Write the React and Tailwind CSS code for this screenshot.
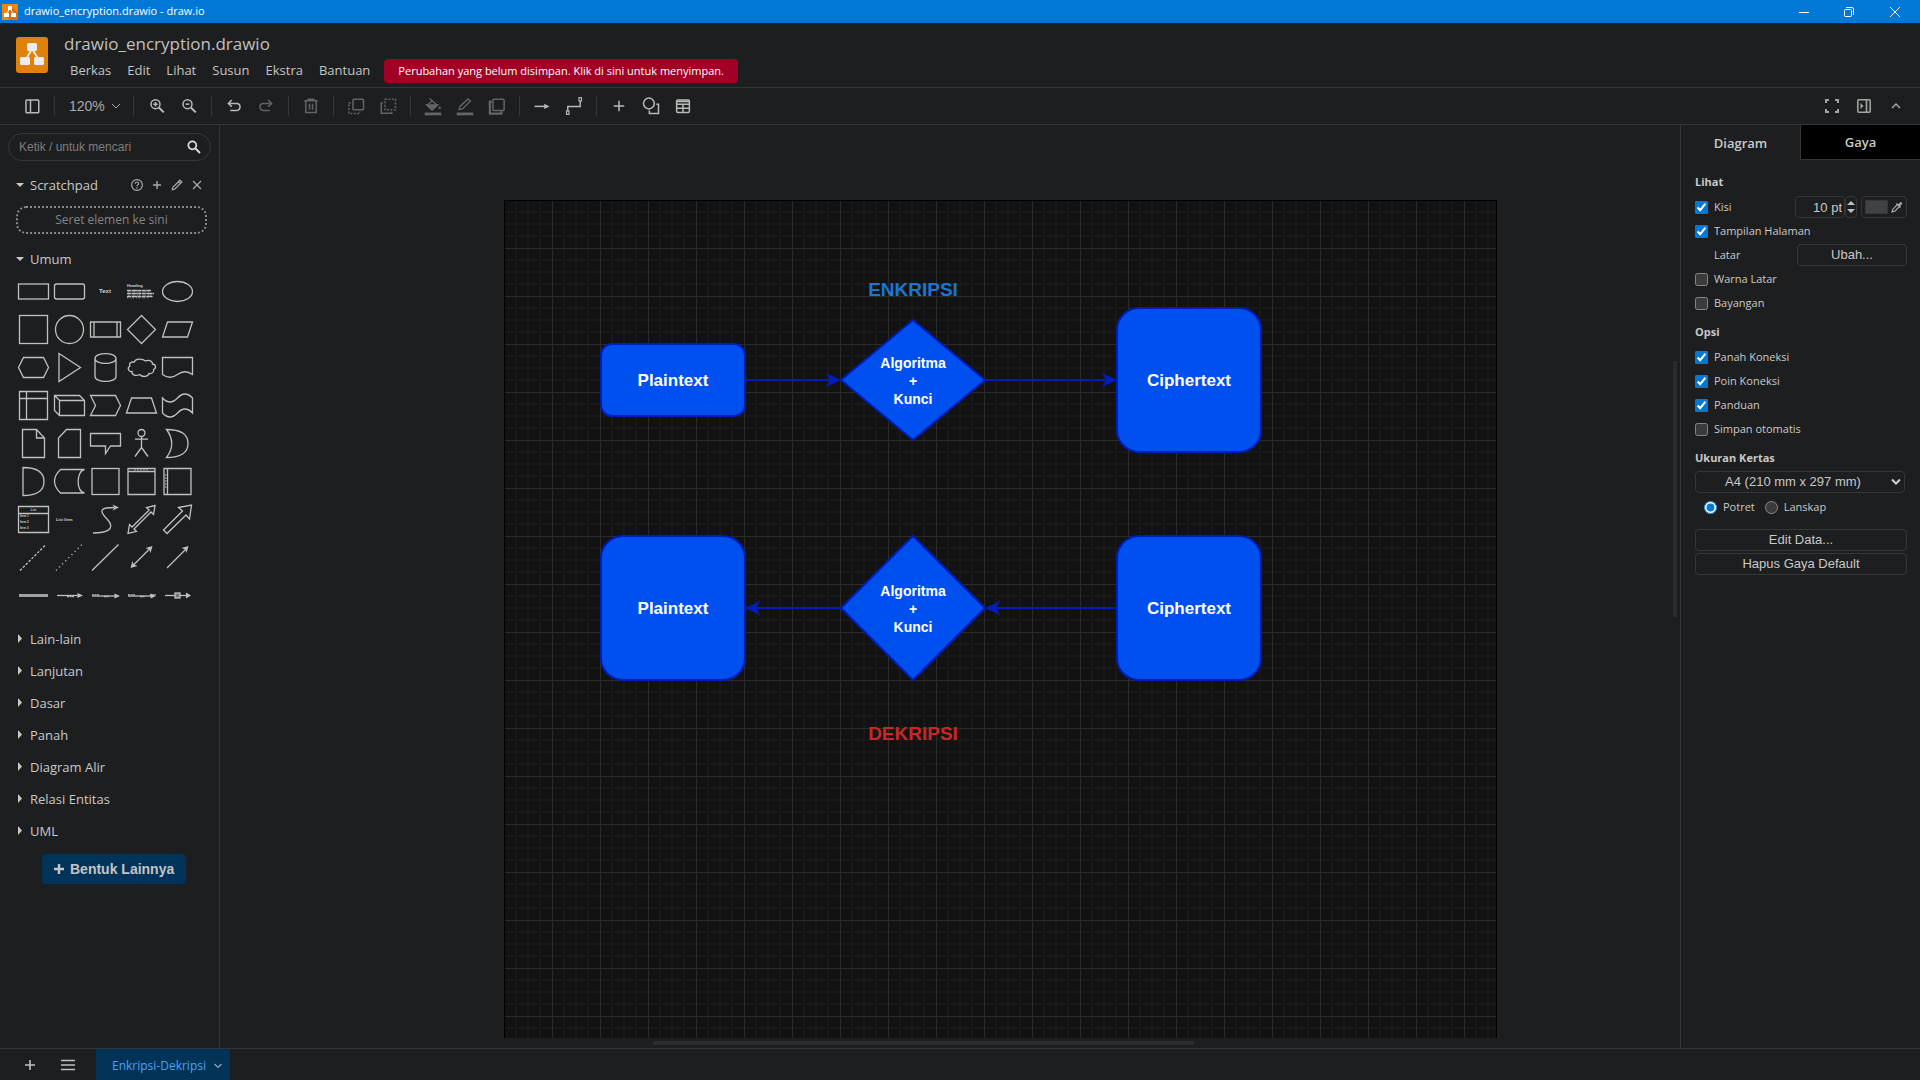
import React from "react";

const UI = "font-['Open_Sans','Noto_Sans',sans-serif]";
const ARIAL = "font-['Liberation_Sans',Arial,sans-serif]";

function Icon({ size = 24, className = "", children, sw = 2 }) {
  return (
    <svg
      width={size}
      height={size}
      viewBox="0 0 24 24"
      fill="none"
      stroke="currentColor"
      strokeWidth={sw}
      className={"shrink-0 " + className}
      aria-hidden="true"
    >
      {children}
    </svg>
  );
}

function Logo({ className }) {
  return (
    <svg viewBox="0 0 32 36" preserveAspectRatio="none" className={className} aria-hidden="true">
      <rect width="32" height="36" rx="3" fill="#de8209" />
      <path d="M16 12 L9.500 23 M16 12 L23 23" stroke="#ececec" strokeWidth="1.800" />
      <rect x="11" y="6" width="10" height="8" rx="1.500" fill="#ececec" />
      <rect x="4" y="20" width="10" height="8" rx="1.500" fill="#ececec" />
      <rect x="18" y="20" width="10" height="8" rx="1.500" fill="#ececec" />
    </svg>
  );
}

function TitleLogo() {
  return (
    <svg viewBox="0 0 16 16" className="size-4" aria-hidden="true">
      <rect width="16" height="16" fill="#f08705" />
      <path d="M10 3 L16 9 V16 H8 L3 12 Z" fill="#df6c0c" />
      <path d="M8 4 L4.500 10 M8 4 L11.500 10" stroke="#fff" strokeWidth="1" />
      <rect x="6" y="2" width="4" height="4" fill="#fff" />
      <rect x="2" y="9" width="5" height="4" fill="#fff" />
      <rect x="9" y="9" width="5" height="4" fill="#fff" />
    </svg>
  );
}

function TitleBar() {
  return (
    <header className="flex h-[23px] shrink-0 items-center bg-[#0078d7] pl-0.5 text-white">
      <TitleLogo />
      <span className="ml-1.5 text-[11px]">drawio_encryption.drawio - draw.io</span>
      <div className="ml-auto flex">
        <button aria-label="Minimize" className="flex h-5 w-12 items-center justify-center">
          <svg width="10" height="10" viewBox="0 0 10 10" stroke="currentColor"><path d="M0 5.500H10" /></svg>
        </button>
        <button aria-label="Restore" className="flex h-5 w-[42px] items-center justify-center">
          <svg width="10" height="10" viewBox="0 0 10 10" fill="none" stroke="currentColor">
            <rect x="0.500" y="2.500" width="7" height="7" rx="1" />
            <path d="M2 0.500H8Q9.500 0.500 9.500 2V8" />
          </svg>
        </button>
        <button aria-label="Close" className="flex h-5 w-[50px] items-center justify-center">
          <svg width="10" height="10" viewBox="0 0 10 10" stroke="currentColor"><path d="M0 0L10 10M10 0L0 10" /></svg>
        </button>
      </div>
    </header>
  );
}

function MenuBar() {
  return (
    <div className="flex h-16 shrink-0 items-start pl-4">
      <Logo className="mt-3.5 h-9 w-8 shrink-0" />
      <div className="ml-4 flex flex-col">
        <h1 className="mt-[9px] text-[17px] leading-6 text-[#c0c0c0]">drawio_encryption.drawio</h1>
        <div className="mt-[3px] flex items-center">
          <nav className="flex gap-4 px-1.5 text-[13px] text-[#c4c4c4]">
            {["Berkas", "Edit", "Lihat", "Susun", "Ekstra", "Bantuan"].map((m) => (
              <button key={m}>{m}</button>
            ))}
          </nav>
          <button className="ml-2 h-6 rounded bg-[#a20025] px-3.5 text-[11px] font-medium text-white">
            Perubahan yang belum disimpan. Klik di sini untuk menyimpan.
          </button>
        </div>
      </div>
    </div>
  );
}

const ICONS = {
  panel: (
    <Icon size={18}>
      <rect x="4" y="4" width="17" height="17" rx="1" />
      <path d="M10 4V21" />
    </Icon>
  ),
  zoomIn: (
    <Icon size={18}>
      <circle cx="10" cy="9.500" r="6" />
      <path d="M14.500 14L21 20.500" strokeWidth="2.600" />
      <path d="M7 9.500H13M10 6.500V12.500" />
    </Icon>
  ),
  zoomOut: (
    <Icon size={18}>
      <circle cx="10" cy="9.500" r="6" />
      <path d="M14.500 14L21 20.500" strokeWidth="2.600" />
      <path d="M7.500 9.500H12.500" />
    </Icon>
  ),
  undo: (
    <Icon size={18}>
      <path d="M9 4L4.500 8.500L9 13M5 8.500H15.500Q20 8.500 20 13T15.500 18H7" />
    </Icon>
  ),
  redo: (
    <Icon size={18}>
      <path d="M15 4L19.500 8.500L15 13M19 8.500H8.500Q4 8.500 4 13T8.500 18H17" />
    </Icon>
  ),
  trash: (
    <Icon size={18}>
      <path d="M3 5H21M8 4.500V3H16V4.500M5 5V20.500H19V5M10 9V17M14 9V17" />
    </Icon>
  ),
  front: (
    <Icon size={18}>
      <rect x="8" y="3" width="14" height="14" rx="1" />
      <path d="M5 8H2.500V22H17V19.500" strokeDasharray="2.600 2" />
    </Icon>
  ),
  back: (
    <Icon size={18}>
      <path d="M5 8H3V21.500H17V19.500" />
      <rect x="8" y="3" width="14" height="14" strokeDasharray="2.600 2" />
    </Icon>
  ),
  fill: (
    <Icon size={20}>
      <path d="M8 3L17 11L11 16.500L5 11L11 6" strokeWidth="1.600" />
      <path d="M5 11H17L11 16.500Z" fill="currentColor" />
      <circle cx="20" cy="14" r="1.500" fill="currentColor" stroke="none" />
      <path d="M2 21.500H22" strokeWidth="3.400" />
    </Icon>
  ),
  pencilLine: (
    <Icon size={20}>
      <path d="M5 16L6 12.500L15.500 3.500L18.500 6L9 15.500Z" strokeWidth="1.700" />
      <path d="M2 21.500H22" strokeWidth="3.400" />
    </Icon>
  ),
  shadow: (
    <Icon size={18}>
      <path d="M5 6H2.500V22H18V19" strokeWidth="3" />
      <rect x="6.500" y="3" width="15" height="15" rx="1.500" />
    </Icon>
  ),
  arrow: (
    <Icon size={18}>
      <path d="M2 12.500H17" />
      <path d="M15 9L22 12.500L15 16Z" fill="currentColor" stroke="none" />
    </Icon>
  ),
  connector: (
    <Icon size={20}>
      <path d="M4.500 18V12.500H19.500V6" strokeWidth="1.700" />
      <rect x="3" y="18" width="3" height="4" strokeWidth="1.400" />
      <rect x="18" y="2" width="3" height="4" strokeWidth="1.400" />
    </Icon>
  ),
  plus: (
    <Icon size={18}>
      <path d="M12 5V19M5 12H19" />
    </Icon>
  ),
  shapes: (
    <Icon size={20}>
      <circle cx="9.500" cy="9" r="6.500" strokeWidth="1.800" />
      <path d="M18.500 10H21V21H10V17.500" strokeWidth="1.800" />
    </Icon>
  ),
  table: (
    <Icon size={18}>
      <rect x="3.500" y="4" width="17" height="16.500" rx="1.500" />
      <path d="M3.500 9.500H20.500M3.500 15H20.500M12 9.500V20.500" />
      <path d="M4 6H20" />
    </Icon>
  ),
};

function Tool({ name, label, dim }) {
  return (
    <button
      aria-label={label}
      className={"flex h-6 w-8 items-center justify-center " + (dim ? "text-[#636465]" : "text-[#b9b9b9]")}
    >
      {ICONS[name]}
    </button>
  );
}

const Sep = () => <div className="mx-1.5 h-5 w-px shrink-0 bg-[#353638]" />;

function Toolbar() {
  return (
    <div className="flex h-[38px] shrink-0 items-center border-y border-[#353638] pl-4">
      <Tool name="panel" label="Panel" />
      <Sep />
      <button className={"flex w-[66px] items-center gap-1.5 pl-2 text-sm text-[#a8a8a8] " + ARIAL}>
        120%
        <svg width="10" height="8" viewBox="0 0 10 8" fill="none" stroke="currentColor"><path d="M1 2L5 6L9 2" /></svg>
      </button>
      <Sep />
      <div className="ml-px flex">
        <Tool name="zoomIn" label="Perbesar" />
        <Tool name="zoomOut" label="Perkecil" />
      </div>
      <Sep />
      <Tool name="undo" label="Urungkan" />
      <Tool name="redo" label="Ulangi" dim />
      <Sep />
      <Tool name="trash" label="Hapus" dim />
      <Sep />
      <Tool name="front" label="Ke depan" dim />
      <Tool name="back" label="Ke belakang" dim />
      <Sep />
      <Tool name="fill" label="Warna isi" dim />
      <Tool name="pencilLine" label="Warna garis" dim />
      <Tool name="shadow" label="Bayangan" dim />
      <Sep />
      <Tool name="arrow" label="Koneksi" />
      <Tool name="connector" label="Titik jalan" />
      <Sep />
      <Tool name="plus" label="Sisipkan" />
      <Tool name="shapes" label="Bentuk" />
      <Tool name="table" label="Tabel" />
      <div className="ml-auto flex pr-2 text-[#a3a3a3]">
        <button aria-label="Layar penuh" className="flex h-6 w-8 items-center justify-center">
          <svg width="14" height="14" viewBox="0 0 14 14" fill="none" stroke="currentColor" strokeWidth="2">
            <path d="M1 4V1H4M10 1H13V4M13 10V13H10M4 13H1V10" />
          </svg>
        </button>
        <button aria-label="Format" className="flex h-6 w-8 items-center justify-center">
          <svg width="14" height="14" viewBox="0 0 14 14" fill="none" stroke="currentColor" strokeWidth="1.600">
            <rect x="0.800" y="0.800" width="12.400" height="12.400" rx="1" />
            <path d="M9.500 1V13" />
            <path d="M3.500 4L6.500 7L3.500 10Z" fill="currentColor" stroke="none" />
          </svg>
        </button>
        <button aria-label="Ciutkan" className="flex h-6 w-8 items-center justify-center">
          <svg width="10" height="8" viewBox="0 0 10 8" fill="none" stroke="currentColor" strokeWidth="1.500"><path d="M1 6L5 2L9 6" /></svg>
        </button>
      </div>
    </div>
  );
}

const tiny = { stroke: "none", fill: "#d0d0d0", textAnchor: "middle", fontFamily: "Liberation Sans", fontWeight: "bold" };

const SHAPES = [
  <rect x="3.500" y="12" width="30" height="15" />,
  <rect x="3.500" y="12" width="30" height="15" rx="2" />,
  <text x="18" y="21" fontSize="6" {...tiny}>Text</text>,
  <>
    <text x="4" y="15" fontSize="4" {...tiny} textAnchor="start">Heading</text>
    <path d="M4 18.500H28M4 21.500H31M4 24.500H30" strokeDasharray="4 .6 6 .4 3 .6" />
    <path d="M5 19.800H27M5 23H30M4 25.800H26" strokeDasharray="1.500 2 1 1" strokeWidth=".7" />
  </>,
  <ellipse cx="18.500" cy="19.500" rx="15" ry="10" />,
  <rect x="4.500" y="5.500" width="28" height="28" />,
  <circle cx="18.500" cy="19.500" r="14" />,
  <path d="M3.500 12H33.500V27H3.500ZM7 12V27M30 12V27" />,
  <path d="M18.500 5.500L32.500 19.500L18.500 33.500L4.500 19.500Z" />,
  <path d="M8.500 12H33.500L28.500 27H3.500Z" />,
  <path d="M3.500 19.500L8.500 9.500H28.500L33.500 19.500L28.500 29.500H8.500Z" />,
  <path d="M8 5.500L29.500 19.500L8 33.500Z" />,
  <path d="M8 10.500V28.500C8 35 29 35 29 28.500V10.500C29 4 8 4 8 10.500C8 17 29 17 29 10.500" />,
  <path d="M11 14.200C8.500 13.500 5.500 15 7 18C3.500 20 6 24 9 23.500C8.500 27 13 28.500 16.500 26.500C19.500 29.500 25 29 26 25.500C29 26 31.500 24 30.500 21.500C34 20 32.500 16 29.500 16C29.500 12.500 25 11.500 22.500 13C19 10 12.500 10.500 11 14.200Z" />,
  <path d="M3.500 9.500H33.500V26.500Q26 21 18.500 26.500T3.500 26.500Z" />,
  <path d="M4.500 5.500H32.500V33.500H4.500ZM11.500 5.500V33.500M4.500 12.500H32.500" />,
  <path d="M3.500 9.500H28.500L33.500 14.500V29.500H8.500L3.500 24.500ZM8.500 29.500V14.500H33.500M3.500 9.500L8.500 14.500" />,
  <path d="M3.500 9.500H28.500L33.500 19.500L28.500 29.500H3.500L8.500 19.500Z" />,
  <path d="M3.500 27L8.500 12H28.500L33.500 27Z" />,
  <path d="M3.500 12Q11 20 18.500 12T33.500 12V27Q26 19 18.500 27T3.500 27Z" />,
  <path d="M7.500 5.500H21.500L29.500 14V33.500H7.500ZM21.500 5.500V14H29.500" />,
  <path d="M15.500 5.500H29.500V33.500H7.500V14Z" />,
  <path d="M3.500 9.500H33.500V22H23.500L18.500 29.500V22H3.500Z" />,
  <path d="M18.500 12.500V23.500L12 32.500M18.500 23.500L25 32.500M12 15.200H25M22 9A3.500 3.500 0 1 1 15 9A3.500 3.500 0 1 1 22 9" />,
  <path d="M7.500 5.500Q29 5.500 29 19.500Q29 33.500 7.500 33.500Q18 19.500 7.500 5.500Z" />,
  <path d="M8 5.500Q29 5.500 29 19.500Q29 33.500 8 33.500Z" />,
  <path d="M9.500 7.500H33.500C25 9 25 30 33.500 31H9.500Q-2.500 19 9.500 7.500Z" />,
  <rect x="5" y="6.500" width="27" height="26" />,
  <>
    <path d="M5 6.500H32V32.500H5ZM5 9.500H32" />
    <path d="M11 7.800H26" strokeWidth=".8" strokeDasharray="2 1" />
  </>,
  <>
    <path d="M5 6.500H32V32.500H5ZM8.500 6.500V32.500" />
    <path d="M6.800 12V27" strokeWidth=".8" strokeDasharray="2 1" />
  </>,
  <>
    <path d="M3.500 6.500H33.500V32.500H3.500ZM3.500 13.500H33.500" />
    <text x="18.500" y="11" fontSize="3" {...tiny}>List</text>
    <text x="5" y="17" fontSize="3" {...tiny} textAnchor="start">Item 1</text>
    <text x="5" y="23" fontSize="3" {...tiny} textAnchor="start">Item 2</text>
    <text x="5" y="29" fontSize="3" {...tiny} textAnchor="start">Item 3</text>
  </>,
  <text x="5" y="21" fontSize="4" {...tiny} textAnchor="start">List Item</text>,
  <>
    <path d="M6 33C18 33 30 30 20 19C10 9 16 7.500 27 7.500" />
    <path d="M32 7.500L25.500 4.500L27.500 7.500L25.500 10.500Z" fill="#c0c0c0" stroke="none" />
  </>,
  <path d="M32 5.500L23.500 7.500L26.200 10L9 27L6.500 24.500L5 33.500L13.500 31.500L11 29L28 12L30.500 14.500Z" />,
  <path d="M4.500 30L23.500 11L19.500 7.500L32.500 5L30.500 19L27 15L8 33.500Z" />,
  <path d="M5 32.500L31 6.500" strokeDasharray="2.500 1.600" />,
  <path d="M5 32.500L31 6.500" strokeDasharray="1.200 3.200" />,
  <path d="M5 32.500L31.500 6.500" />,
  <>
    <path d="M9.500 28L27 10.500" />
    <path d="M29.500 8L27.500 15L26.200 11.500L22.500 10ZM7.500 30L9.500 23L10.800 26.500L14.500 28Z" fill="#c0c0c0" stroke="none" />
  </>,
  <>
    <path d="M8 30L27 11" />
    <path d="M29.500 8L27.500 15L26.200 11.500L22.500 10Z" fill="#c0c0c0" stroke="none" />
  </>,
  <path d="M4 19.500H33" strokeWidth="3" stroke="#a0a0a0" />,
  <>
    <path d="M6 19.500H28" />
    <path d="M32 19.500L26.500 17V22Z" fill="#c0c0c0" stroke="none" />
    <path d="M16 20.500H23" strokeWidth="1.500" strokeDasharray="2 .6" />
  </>,
  <>
    <path d="M5 20H29" />
    <path d="M33 20L27.500 17.500V22.500Z" fill="#c0c0c0" stroke="none" />
    <path d="M5 18.800H12M17 20.500H22" strokeDasharray="2 .6" />
  </>,
  <>
    <path d="M5 20H29" />
    <path d="M33 20L27.500 17.500V22.500Z" fill="#c0c0c0" stroke="none" />
    <path d="M5 18.800H12M17 20.500H22M27 18.800H33" strokeDasharray="2 .6" />
  </>,
  <>
    <path d="M6 19.500H28" />
    <path d="M32 19.500L27 16.500V22.500Z" fill="#c0c0c0" stroke="none" />
    <rect x="16" y="17" width="5" height="5" fill="#777" />
  </>,
];

function Triangle({ open }) {
  return (
    <svg width="8" height="12" viewBox="0 0 8 12" fill="#c9c9c9" aria-hidden="true" className="shrink-0">
      {open ? <path d="M0 3H8L4 7Z" /> : <path d="M2 0L6 4.500L2 9Z" />}
    </svg>
  );
}

const SECTIONS = ["Lain-lain", "Lanjutan", "Dasar", "Panah", "Diagram Alir", "Relasi Entitas", "UML"];

function Sidebar() {
  return (
    <aside className="flex w-[220px] shrink-0 flex-col border-r border-[#353638] text-[13px] font-medium text-[#c9c9c9]">
      <div className="mx-2 mt-2 flex h-7 items-center rounded-full border border-[#353638] pr-2 pl-2.5">
        <input
          aria-label="Cari bentuk"
          placeholder="Ketik / untuk mencari"
          className={"min-w-0 flex-1 bg-transparent text-[12px] outline-none placeholder:text-[#7f7f7f] " + ARIAL}
        />
        <Icon size={16} className="text-[#dedede]" sw={2.6}>
          <circle cx="9.500" cy="9.500" r="6" />
          <path d="M14 14L21 21" strokeWidth="3" />
        </Icon>
      </div>
      <div className="mt-2 flex h-8 items-center pr-3 pl-4">
        <button className="flex items-center gap-1.5 pt-0.5">
          <Triangle open />
          Scratchpad
        </button>
        <div className="ml-auto flex text-[#aaaaaa]">
          <button aria-label="Bantuan" className="flex w-5 justify-center">
            <svg width="12" height="12" viewBox="0 0 12 12" fill="none" stroke="currentColor" strokeWidth="1.200">
              <circle cx="6" cy="6" r="5.400" />
              <path d="M4.300 4.800Q4.400 3 6 3T7.700 4.600Q7.700 5.400 6.800 5.900T6 7.300" />
              <path d="M6 8.300V9.600" />
            </svg>
          </button>
          <button aria-label="Tambah" className="flex w-5 justify-center">
            <svg width="12" height="12" viewBox="0 0 12 12" stroke="currentColor" strokeWidth="1.400"><path d="M6 2V10M2 6H10" /></svg>
          </button>
          <button aria-label="Edit" className="flex w-5 justify-center">
            <svg width="12" height="12" viewBox="0 0 12 12" fill="none" stroke="currentColor" strokeWidth="1.200">
              <path d="M1.200 10.800L1.800 8.300L9 1.200L10.900 3L3.700 10.200ZM7.500 2.700L9.300 4.500" />
            </svg>
          </button>
          <button aria-label="Tutup" className="flex w-5 justify-center">
            <svg width="12" height="12" viewBox="0 0 12 12" stroke="currentColor" strokeWidth="1.200"><path d="M2 2L10 10M10 2L2 10" /></svg>
          </button>
        </div>
      </div>
      <div className="mt-[5px] mr-3 ml-4 flex h-7 shrink-0 items-center justify-center rounded-[10px] border-2 border-dotted border-[#8b8b8b] text-[12px] font-normal text-[#838485]">
        Seret elemen ke sini
      </div>
      <button className="mt-2.5 flex h-8 items-center gap-1.5 pl-4">
        <Triangle open />
        Umum
      </button>
      <div className="-mt-1 mr-6 ml-[15px] grid shrink-0 grid-cols-5">
        {SHAPES.map((s, i) => (
          <button key={i} aria-label={"Bentuk " + (i + 1)} className="h-[38px]">
            <svg width="36" height="38" viewBox="0 0 36 38" fill="none" stroke="#c0c0c0" strokeWidth="1.300">
              {s}
            </svg>
          </button>
        ))}
      </div>
      <div className="mt-2.5 flex flex-col">
        {SECTIONS.map((s) => (
          <button key={s} className="flex h-8 items-center gap-1.5 pl-4">
            <Triangle />
            {s}
          </button>
        ))}
      </div>
      <button className={"mt-1.5 ml-[42px] flex h-[30px] items-center gap-1.5 self-start rounded bg-[#00335a] px-3 text-sm font-bold text-[#c4c4c4] " + ARIAL}>
        <svg width="10" height="10" viewBox="0 0 10 10" stroke="currentColor" strokeWidth="2.400"><path d="M5 0V10M0 5H10" /></svg>
        Bentuk Lainnya
      </button>
    </aside>
  );
}

function Box({ className, children }) {
  return (
    <div className={"absolute flex items-center justify-center border-2 border-[#001dbc] bg-[#0050ef] pt-0.5 text-[17px] font-bold text-white " + className}>
      {children}
    </div>
  );
}

function Decision({ className }) {
  return (
    <div className={"absolute flex w-36 items-center justify-center text-center text-sm leading-[18px] font-bold text-white " + className}>
      <span>
        Algoritma
        <br />+<br />
        Kunci
      </span>
    </div>
  );
}

function Canvas() {
  return (
    <main className="relative min-w-0 flex-1 overflow-hidden">
      <div className={"relative mt-[75px] ml-[284px] h-[838px] w-[993px] overflow-hidden border-x border-t border-black bg-[#121212] " + ARIAL}>
        <svg className="absolute -top-px -left-px h-[838px] w-[993px]" aria-hidden="true">
          <defs>
            <pattern id="grid" width="48" height="48" patternUnits="userSpaceOnUse">
              <path d="M12 0V48M24 0V48M36 0V48M0 12H48M0 24H48M0 36H48" stroke="#181818" strokeWidth="2" />
              <path d="M0.500 0V48M0 0.500H48" stroke="#2b2b2b" />
            </pattern>
          </defs>
          <rect width="993" height="838" fill="url(#grid)" />
          <path d="M0.500 838V0.500H992.500V838" fill="none" stroke="#000" />
          <g stroke="#001dbc" strokeWidth="2" strokeLinejoin="miter">
            <path d="M241 180H328M481 180H603M337 408H251M613 408H491" fill="none" />
            <path d="M337 180L409 120L481 180L409 240ZM337 408L409 336L481 408L409 480Z" fill="#0050ef" />
            <g fill="#001dbc" stroke="none">
              <path d="M337 180L322 173L326 180L322 187Z" />
              <path d="M613 180L598 173L602 180L598 187Z" />
              <path d="M241 408L256 401L252 408L256 415Z" />
              <path d="M481 408L496 401L492 408L496 415Z" />
            </g>
          </g>
        </svg>
        <h2 className="absolute top-[77px] left-[336px] w-36 text-center text-[19px] leading-6 font-bold text-[#1976d2]">ENKRIPSI</h2>
        <Box className="top-[142px] left-[95px] h-[74px] w-[146px] rounded-[12px]">Plaintext</Box>
        <Decision className="top-[120px] left-[336px] h-[120px]" />
        <Box className="top-[106px] left-[611px] h-[146px] w-[146px] rounded-[23px]">Ciphertext</Box>
        <Box className="top-[334px] left-[95px] h-[146px] w-[146px] rounded-[23px]">Plaintext</Box>
        <Decision className="top-[336px] left-[336px] h-36" />
        <Box className="top-[334px] left-[611px] h-[146px] w-[146px] rounded-[23px]">Ciphertext</Box>
        <h2 className="absolute top-[521px] left-[336px] w-36 text-center text-[19px] leading-6 font-bold text-[#c62828]">DEKRIPSI</h2>
      </div>
      <div className="absolute top-[236px] right-[3px] h-64 w-1 bg-[#2c2c2d]" />
      <div className="absolute bottom-[3px] left-[433px] h-1 w-[541px] bg-[#2c2c2d]" />
    </main>
  );
}

function Check({ label, on }) {
  return (
    <label className="flex h-6 items-center gap-1.5">
      <input type="checkbox" defaultChecked={on} className="size-[13px] accent-[#0078d7]" />
      {label}
    </label>
  );
}

const FIELD = "rounded border border-[#353638] text-[#c9c9c9] font-['Liberation_Sans',Arial,sans-serif] text-[13px] ";

function FormatPanel() {
  return (
    <aside className="w-60 shrink-0 border-l border-[#353638] text-[11px] text-[#c9c9c9] scheme-dark">
      <div role="tablist" className="flex h-[35px] text-[13px] font-semibold">
        <button role="tab" aria-selected="true" className="flex-1 pt-0.5">Diagram</button>
        <button role="tab" aria-selected="false" className="flex-1 border-b border-l border-[#353638] bg-black pt-0.5">Gaya</button>
      </div>
      <div className="flex flex-col pr-[13px] pl-3.5">
        <h3 className="mt-2.5 flex h-6 items-center font-bold">Lihat</h3>
        <div className="mt-px flex h-6 items-center">
          <Check label="Kisi" on />
          <input aria-label="Ukuran kisi" defaultValue="10 pt" className={FIELD + "ml-auto h-[22px] w-[50px] pr-0.5 text-right"} />
          <div className="flex h-[22px] w-3 flex-col items-center justify-center gap-1 rounded border border-[#353638]">
            <button aria-label="Naik"><svg width="8" height="4" viewBox="0 0 8 4" fill="#c0c0c0" className="block"><path d="M0 4H8L4 0Z" /></svg></button>
            <button aria-label="Turun"><svg width="8" height="4" viewBox="0 0 8 4" fill="#c0c0c0" className="block"><path d="M0 0H8L4 4Z" /></svg></button>
          </div>
          <button aria-label="Warna kisi" className={FIELD + "ml-1 flex h-[22px] w-[46px] items-center justify-between px-[3px]"}>
            <span className="h-3.5 w-[23px] border border-[#353638] bg-[#424242]" />
            <svg width="12" height="12" viewBox="0 0 12 12" fill="none" stroke="#a8a8a8" strokeWidth="1.200">
              <path d="M6.500 3.500L1.800 8.200L1 11L3.800 10.200L8.500 5.500" />
              <path d="M5.500 2.500L9.500 6.500" strokeWidth="1.600" />
              <path d="M7.500 4L9.800 1.700Q10.500 2 10.600 2.500L8.300 5Z" fill="#a8a8a8" />
            </svg>
          </button>
        </div>
        <Check label="Tampilan Halaman" on />
        <div className="flex h-6 items-center justify-between pl-[19px]">
          Latar
          <button className={FIELD + "h-[22px] w-[110px]"}>Ubah...</button>
        </div>
        <Check label="Warna Latar" />
        <Check label="Bayangan" />
        <h3 className="mt-[5px] flex h-6 items-center font-bold">Opsi</h3>
        <div className="mt-px flex flex-col">
          <Check label="Panah Koneksi" on />
          <Check label="Poin Koneksi" on />
          <Check label="Panduan" on />
          <Check label="Simpan otomatis" />
        </div>
        <h3 className="mt-[5px] flex h-6 items-center font-bold">Ukuran Kertas</h3>
        <div className="relative mt-px mr-0.5">
          <select aria-label="Ukuran Kertas" className={FIELD + "block h-[22px] w-full appearance-none bg-[#1d1e1f] pr-3.5 text-center"}>
            <option>A4 (210 mm x 297 mm)</option>
          </select>
          <svg width="10" height="8" viewBox="0 0 10 8" fill="none" stroke="#d0d0d0" strokeWidth="2" className="pointer-events-none absolute top-[7px] right-1"><path d="M1 1.500L5 5.500L9 1.500" /></svg>
        </div>
        <div className="mt-0.5 flex h-6 items-center gap-2.5 pl-[9px]">
          {["Potret", "Lanskap"].map((r, i) => (
            <label key={r} className="flex items-center gap-1.5">
              <input type="radio" name="orientation" defaultChecked={i === 0} className="size-[13px] accent-[#0078d7]" />
              {r}
            </label>
          ))}
        </div>
        <button className={FIELD + "mt-2.5 h-[22px]"}>Edit Data...</button>
        <button className={FIELD + "mt-0.5 h-[22px]"}>Hapus Gaya Default</button>
      </div>
    </aside>
  );
}

function Footer() {
  return (
    <footer className="flex h-8 shrink-0 items-stretch border-t border-[#353638] text-[#c0c0c0]">
      <button aria-label="Sisipkan halaman" className="ml-3.5 flex w-8 items-center justify-center">
        <svg width="12" height="12" viewBox="0 0 12 12" stroke="currentColor" strokeWidth="1.600"><path d="M6 1V11M1 6H11" /></svg>
      </button>
      <button aria-label="Halaman" className="ml-1.5 flex w-8 items-center justify-center">
        <svg width="14" height="12" viewBox="0 0 14 12" stroke="currentColor" strokeWidth="1.600"><path d="M0 1.500H14M0 6H14M0 10.500H14" /></svg>
      </button>
      <button className="ml-3 flex items-center gap-2 bg-[#003355] pt-0.5 pr-2 pl-4 text-[12px] text-[#4ba3f5]">
        Enkripsi-Dekripsi
        <svg width="8" height="8" viewBox="0 0 8 8" fill="none" stroke="#8fa9bd" strokeWidth="1.200"><path d="M0.500 2L4 5.500L7.500 2" /></svg>
      </button>
    </footer>
  );
}

export default function App() {
  return (
    <div className={"flex h-screen flex-col overflow-hidden bg-[#1d1e1f] " + UI}>
      <TitleBar />
      <MenuBar />
      <Toolbar />
      <div className="flex min-h-0 flex-1">
        <Sidebar />
        <Canvas />
        <FormatPanel />
      </div>
      <Footer />
    </div>
  );
}
